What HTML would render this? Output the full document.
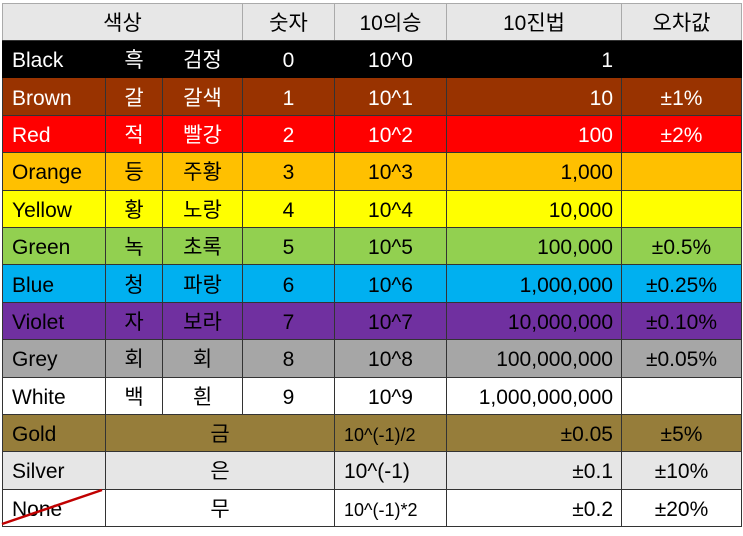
<!DOCTYPE html>
<html><head><meta charset="utf-8"><style>
html,body{margin:0;padding:0;background:#fff;width:743px;height:536px;overflow:hidden}
table{position:absolute;left:2px;top:3px;border-collapse:collapse;table-layout:fixed;font-family:"Liberation Sans","Noto Sans CJK KR",sans-serif;font-size:21px;color:#000}
td{border:1px solid #333;padding:4px 6px 0 6px;height:32.4px;line-height:30px;white-space:nowrap;text-align:center;overflow:hidden;vertical-align:middle}
td.l{text-align:left;padding-left:9px}
td.r{text-align:right;padding-right:8px}
tr.h td{background:#e7e7e7;border-color:#aaa;border-bottom-color:#333;height:32px}
tr.k td{background:#000;color:#fff;border-color:#000}
.w td{color:#fff}
.s{font-size:18px}
</style></head><body>
<table>
<colgroup><col style="width:103px"><col style="width:57px"><col style="width:80px"><col style="width:92px"><col style="width:112px"><col style="width:175px"><col style="width:120px"></colgroup>
<tr class="h"><td colspan="3">색상</td><td>숫자</td><td>10의승</td><td>10진법</td><td>오차값</td></tr>
<tr class="k"><td class="l">Black</td><td>흑</td><td>검정</td><td>0</td><td>10^0</td><td class="r">1</td><td></td></tr>
<tr class="w" style="background:#993300"><td class="l">Brown</td><td>갈</td><td>갈색</td><td>1</td><td>10^1</td><td class="r">10</td><td>±1%</td></tr>
<tr class="w" style="background:#ff0000"><td class="l">Red</td><td>적</td><td>빨강</td><td>2</td><td>10^2</td><td class="r">100</td><td>±2%</td></tr>
<tr style="background:#ffc000"><td class="l">Orange</td><td>등</td><td>주황</td><td>3</td><td>10^3</td><td class="r">1,000</td><td></td></tr>
<tr style="background:#ffff00"><td class="l">Yellow</td><td>황</td><td>노랑</td><td>4</td><td>10^4</td><td class="r">10,000</td><td></td></tr>
<tr style="background:#92d050"><td class="l">Green</td><td>녹</td><td>초록</td><td>5</td><td>10^5</td><td class="r">100,000</td><td>±0.5%</td></tr>
<tr style="background:#00b0f0"><td class="l">Blue</td><td>청</td><td>파랑</td><td>6</td><td>10^6</td><td class="r">1,000,000</td><td>±0.25%</td></tr>
<tr style="background:#7030a0"><td class="l">Violet</td><td>자</td><td>보라</td><td>7</td><td>10^7</td><td class="r">10,000,000</td><td>±0.10%</td></tr>
<tr style="background:#a6a6a6"><td class="l">Grey</td><td>회</td><td>회</td><td>8</td><td>10^8</td><td class="r">100,000,000</td><td>±0.05%</td></tr>
<tr style="background:#fff"><td class="l">White</td><td>백</td><td>흰</td><td>9</td><td>10^9</td><td class="r">1,000,000,000</td><td></td></tr>
<tr style="background:#967d3a"><td class="l">Gold</td><td colspan="3">금</td><td class="l s">10^(-1)/2</td><td class="r">±0.05</td><td>±5%</td></tr>
<tr style="background:#e6e6e6"><td class="l">Silver</td><td colspan="3">은</td><td class="l">10^(-1)</td><td class="r">±0.1</td><td>±10%</td></tr>
<tr style="background:#fff"><td class="l">None</td><td colspan="3">무</td><td class="l s">10^(-1)*2</td><td class="r">±0.2</td><td>±20%</td></tr>
</table>
<svg style="position:absolute;left:0;top:0" width="743" height="536"><line x1="2" y1="524" x2="102" y2="490" stroke="#c00000" stroke-width="2.5"/></svg>
</body></html>
